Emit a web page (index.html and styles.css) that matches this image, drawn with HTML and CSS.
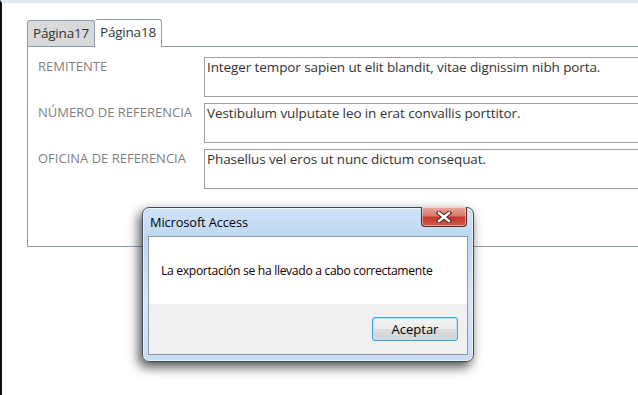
FILE: index.html
```html
<!DOCTYPE html>
<html lang="es">
<head>
<meta charset="utf-8">
<title>Microsoft Access</title>
<link rel="stylesheet" href="styles.css">
</head>
<body>
<div class="screen">
  <div class="form">
    <div class="tabs">
      <div class="tab">Página17</div>
      <div class="tab active">Página18</div>
    </div>
    <div class="panel">
      <div class="field">
        <div class="label">REMITENTE</div>
        <div class="box">Integer tempor sapien ut elit blandit, vitae dignissim nibh porta.</div>
      </div>
      <div class="field">
        <div class="label">NÚMERO DE REFERENCIA</div>
        <div class="box">Vestibulum vulputate leo in erat convallis porttitor.</div>
      </div>
      <div class="field">
        <div class="label">OFICINA DE REFERENCIA</div>
        <div class="box">Phasellus vel eros ut nunc dictum consequat.</div>
      </div>
    </div>
  </div>

  <div class="dialog">
    <div class="titlebar">
      <span class="title">Microsoft Access</span>
      <div class="close">
        <svg width="16" height="12" viewBox="0 0 16 12">
          <path d="M3 2 L13 10 M13 2 L3 10" stroke="#4a2320" stroke-width="4.4" stroke-linecap="square" fill="none"/>
          <path d="M3 2 L13 10 M13 2 L3 10" stroke="#ffffff" stroke-width="2.4" stroke-linecap="square" fill="none"/>
        </svg>
      </div>
    </div>
    <div class="client">
      <div class="message">La exportación se ha llevado a cabo correctamente</div>
      <div class="actions">
        <button class="btn">Aceptar</button>
      </div>
    </div>
  </div>
</div>
</body>
</html>
```

FILE: styles.css
```css
* { box-sizing: border-box; }
html, body {
  margin: 0;
  padding: 0;
  width: 638px;
  height: 395px;
  overflow: hidden;
  background: #ffffff;
}
.screen {
  position: relative;
  width: 638px;
  height: 395px;
  overflow: hidden;
  border-left: 2px solid #111111;
  border-top: 3px solid #e1e7ef;
  font-family: "Open Sans", "Noto Sans", sans-serif;
}
.form {
  padding: 16px 0 0 25px;
}
.tabs {
  display: flex;
  align-items: flex-end;
  height: 27px;
}
.tab {
  height: 26px;
  padding: 0 5px 0 5px;
  border: 1px solid #8d9bb0;
  border-bottom: none;
  border-radius: 3px 3px 0 0;
  background: #d9d9d9;
  color: #333333;
  font-size: 13.5px;
  line-height: 25px;
  letter-spacing: -0.2px;
}
.tab.active {
  height: 28px;
  margin-bottom: -1px;
  background: #ffffff;
  border-left: none;
  position: relative;
  z-index: 1;
}
.panel {
  height: 201px;
  width: 700px;
  border: 1px solid #8d9bb0;
  border-right: none;
  padding: 10px 0 0 10px;
  display: flex;
  flex-direction: column;
  gap: 6px;
}
.field {
  display: flex;
  height: 40px;
}
.label {
  width: 166px;
  padding-top: 0;
  font-size: 13px;
  color: #7f7f7f;
}
.box {
  width: 500px;
  border: 1px solid #a0a0a0;
  padding: 0 0 0 2px;
  font-size: 13.5px;
  color: #333333;
  letter-spacing: -0.1px;
  white-space: nowrap;
}

/* dialog */
.dialog {
  position: absolute;
  left: 140px;
  top: 204px;
  width: 332px;
  height: 155px;
  border: 1px solid #3f4b58;
  border-radius: 7px;
  background: linear-gradient(180deg, #cfe2f7 0%, #bfd7f1 20%, #d5e6f8 60%, #c8ddf4 100%);
  box-shadow: -3px 5px 12px rgba(0,0,0,0.7), 0 0 0 1px rgba(255,255,255,0.6) inset;
  padding: 0 5px 6px 5px;
  display: flex;
  flex-direction: column;
}
.titlebar {
  position: relative;
  height: 28px;
}
.title {
  position: absolute;
  left: 2px;
  top: 5px;
  font-size: 12.8px;
  color: #000000;
  letter-spacing: -0.1px;
}
.close {
  position: absolute;
  right: 1px;
  top: -1px;
  width: 46px;
  height: 20px;
  border: 1px solid #5c2520;
  border-top: none;
  border-radius: 0 0 4px 4px;
  background: linear-gradient(180deg, #e9a99f 0%, #d77a6d 45%, #c2392b 55%, #cf5a49 100%);
  box-shadow: 0 0 0 1px rgba(255,255,255,0.45) inset;
  display: flex;
  align-items: center;
  justify-content: center;
}
.client {
  flex: 1;
  border: 1px solid #8a9aac;
  background: #f0f0f0;
  display: flex;
  flex-direction: column;
}
.message {
  height: 67px;
  background: #ffffff;
  padding: 25px 0 0 12px;
  font-size: 12.2px;
  color: #1a0000;
  letter-spacing: -0.35px;
}
.actions {
  flex: 1;
  display: flex;
  justify-content: flex-end;
  align-items: flex-start;
  padding: 13px 9px 0 0;
}
.btn {
  width: 86px;
  height: 24px;
  border: 1px solid #3c9fd8;
  border-radius: 3px;
  background: linear-gradient(180deg, #f4f4f4 0%, #ececec 48%, #dcdcdc 52%, #d4d4d4 100%);
  box-shadow: 0 0 0 1px #bfe6f9 inset;
  font-family: "Open Sans", "Noto Sans", sans-serif;
  font-size: 13px;
  color: #000000;
  padding: 0;
  line-height: 20px;
}
```
